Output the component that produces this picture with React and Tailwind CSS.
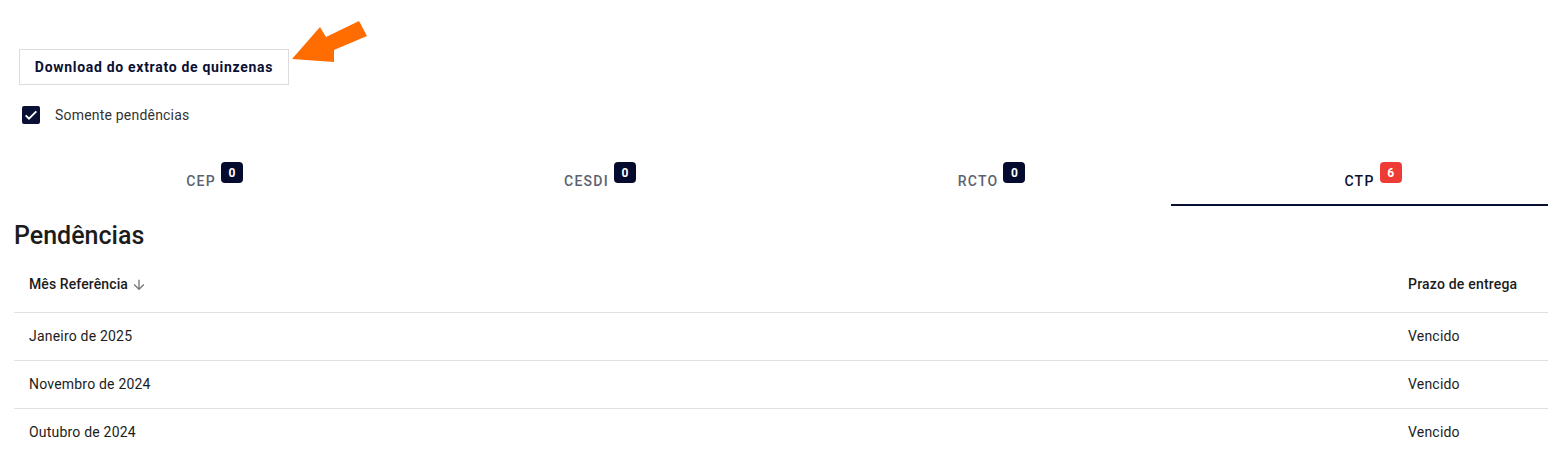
import React from 'react';

const tabs = [
  { label: 'CEP', count: 0, w: 'w-[374px]' },
  { label: 'CESDI', count: 0, w: 'w-[397px]' },
  { label: 'RCTO', count: 0, w: 'w-[386px]' },
  { label: 'CTP', count: 6, w: 'w-[377px]', active: true },
];

const rows = ['Janeiro de 2025', 'Novembro de 2024', 'Outubro de 2024'];

function Arrow() {
  return (
    <svg className="absolute left-[280px] top-[10px]" width="100" height="60" viewBox="280 10 100 60">
      <polygon
        points="292,59 320,27 326,37 359,21 367,36 334,50 334,62"
        fill="#ff6d00"
      />
    </svg>
  );
}

export default function App() {
  return (
    <div className="relative w-[1557px] h-[453px] bg-white overflow-hidden pl-[14px] pr-[9px] font-['Roboto',sans-serif]">
      <Arrow />
      <div className="pt-[49px]">
        <button className="ml-[5px] h-9 w-[270px] border border-[#dcdcdc] bg-white text-[14px] font-bold tracking-[0.7px] text-[#0a1033]">
          Download do extrato de quinzenas
        </button>
      </div>
      <label className="mt-[21px] ml-[8px] flex items-center gap-[15px] h-[18px]">
        <span className="w-[18px] h-[18px] rounded-[2px] bg-[#0a1033] flex items-center justify-center">
          <svg width="16" height="16" viewBox="0 0 24 24" fill="none" stroke="white" strokeWidth="2.8">
            <path d="M4 12.5l5 5L20 6.5" />
          </svg>
        </span>
        <span className="text-[14px] tracking-[0.2px] text-[#333]">Somente pendências</span>
      </label>

      <div className="mt-[34px] flex h-[48px]">
        {tabs.map((t) => (
          <div
            key={t.label}
            className={`${t.w} shrink-0 flex items-center justify-center ${t.active ? 'border-b-2 border-[#0a1033]' : 'border-b-2 border-transparent'}`}
          >
            <span className="relative leading-[21px]">
              <span
                className={`text-[14px] font-medium tracking-[1.25px] ${t.active ? 'text-[#0a1033]' : 'text-[#5c6370]'}`}
              >
                {t.label}
              </span>
              <span
                className={`absolute left-[calc(100%+5px)] top-[-8px] min-w-[22px] h-[21px] px-[6px] rounded-[4px] text-white text-[12px] leading-none font-bold flex items-center justify-center ${t.count ? 'bg-[#ef3b36]' : 'bg-[#050b2e]'}`}
              >
                {t.count}
              </span>
            </span>
          </div>
        ))}
      </div>

      <h2 className="mt-[16px] text-[25px] leading-[28px] font-medium text-[#1c1c1c]">Pendências</h2>

      <div className="mt-[7px] tracking-[0.2px]">
        <div className="flex items-center h-[56px] border-b border-[#e0e0e0] text-[14px] font-medium text-[#1c1c1c]">
          <div className="flex-1 pl-[15px] flex items-center gap-[3px] tracking-[0.1px]">
            Mês Referência
            <svg width="16" height="16" viewBox="0 0 24 24" fill="#777">
              <path d="M20 12l-1.41-1.41L13 16.17V4h-2v12.17l-5.58-5.59L4 12l8 8 8-8z" />
            </svg>
          </div>
          <div className="w-[140px]">Prazo de entrega</div>
        </div>
        {rows.map((r) => (
          <div key={r} className="flex items-center h-[48px] border-b border-[#e0e0e0] text-[14px] text-[#1c1c1c]">
            <div className="flex-1 pl-[15px]">{r}</div>
            <div className="w-[140px]">Vencido</div>
          </div>
        ))}
      </div>
    </div>
  );
}
